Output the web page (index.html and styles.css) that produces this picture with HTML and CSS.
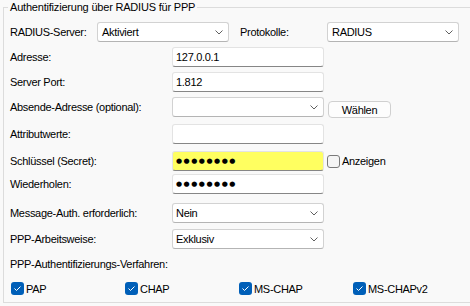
FILE: index.html
```html
<!DOCTYPE html>
<html lang="de">
<head>
    <meta charset="UTF-8">
    <title>RADIUS für PPP</title>
    <link rel="stylesheet" href="styles.css">
</head>
<body>
    <fieldset class="group">
        <legend>Authentifizierung über RADIUS für PPP</legend>

        <div class="server-row">
            <span class="label label-wide">RADIUS-Server:</span>
            <div class="combo combo-top">
                <span>Aktiviert</span>
                <svg class="chevron" width="8" height="5" viewBox="0 0 8 5"><path d="M0.5 0.5 L4 4 L7.5 0.5"/></svg>
            </div>
            <span class="label label-wide label-proto">Protokolle:</span>
            <div class="combo combo-top">
                <span>RADIUS</span>
                <svg class="chevron" width="8" height="5" viewBox="0 0 8 5"><path d="M0.5 0.5 L4 4 L7.5 0.5"/></svg>
            </div>
        </div>

        <div class="form">
            <span class="label">Adresse:</span>
            <div class="field">127.0.0.1</div>
            <span></span>

            <span class="label">Server Port:</span>
            <div class="field">1.812</div>
            <span></span>

            <span class="label">Absende-Adresse (optional):</span>
            <div class="combo">
                <span></span>
                <svg class="chevron" width="8" height="5" viewBox="0 0 8 5"><path d="M0.5 0.5 L4 4 L7.5 0.5"/></svg>
            </div>
            <button class="btn">Wählen</button>

            <span class="label">Attributwerte:</span>
            <div class="field"></div>
            <span></span>

            <span class="label">Schlüssel (Secret):</span>
            <div class="field field-secret"><span class="dots">●●●●●●●●</span></div>
            <label class="check check-show"><span class="box"></span>Anzeigen</label>

            <span class="label">Wiederholen:</span>
            <div class="field"><span class="dots">●●●●●●●●</span></div>
            <span></span>

            <span class="label">Message-Auth. erforderlich:</span>
            <div class="combo">
                <span>Nein</span>
                <svg class="chevron" width="8" height="5" viewBox="0 0 8 5"><path d="M0.5 0.5 L4 4 L7.5 0.5"/></svg>
            </div>
            <span></span>

            <span class="label">PPP-Arbeitsweise:</span>
            <div class="combo">
                <span>Exklusiv</span>
                <svg class="chevron" width="8" height="5" viewBox="0 0 8 5"><path d="M0.5 0.5 L4 4 L7.5 0.5"/></svg>
            </div>
            <span></span>
        </div>

        <div class="label methods-title">PPP-Authentifizierungs-Verfahren:</div>
        <div class="methods">
            <label class="check"><span class="box checked"><svg width="13" height="13" viewBox="0 0 13 13"><path d="M3.5 6.5 L5.5 8.5 L9.5 4.5"/></svg></span>PAP</label>
            <label class="check"><span class="box checked"><svg width="13" height="13" viewBox="0 0 13 13"><path d="M3.5 6.5 L5.5 8.5 L9.5 4.5"/></svg></span>CHAP</label>
            <label class="check"><span class="box checked"><svg width="13" height="13" viewBox="0 0 13 13"><path d="M3.5 6.5 L5.5 8.5 L9.5 4.5"/></svg></span>MS-CHAP</label>
            <label class="check"><span class="box checked"><svg width="13" height="13" viewBox="0 0 13 13"><path d="M3.5 6.5 L5.5 8.5 L9.5 4.5"/></svg></span>MS-CHAPv2</label>
        </div>
    </fieldset>
</body>
</html>
```

FILE: styles.css
```css
:root {
    --bg: #f9f9f9;
    --line: #dcdcdc;
    --field-border: #e3e3e3;
    --field-bottom: #868686;
    --accent: #005fb8;
}

body {
    margin: 0;
    width: 470px;
    height: 306px;
    background: var(--bg);
    color: #000;
    font-family: 'Liberation Sans', Arial, sans-serif;
    font-size: 11px;
    letter-spacing: -0.3px;
    overflow: hidden;
}

.group {
    box-sizing: border-box;
    width: 466px;
    height: 303px;
    margin: 0 0 0 3px;
    padding: 7px 6px 0 6px;
    border: 1px solid var(--line);
}

.group legend {
    line-height: 15px;
    padding: 0 2px;
    margin-left: -2px;
    letter-spacing: -0.2px;
}

.label {
    display: flex;
    align-items: center;
    height: 20px;
    white-space: nowrap;
}

.server-row {
    display: flex;
    align-items: center;
    height: 20px;
}

.label-wide {
    width: 87px;
    flex: none;
}

.label-proto {
    margin-left: 11px;
}

.combo,
.field {
    box-sizing: border-box;
    display: flex;
    align-items: center;
    height: 20px;
    background: #fff;
    border-radius: 3px;
    white-space: nowrap;
}

.combo {
    justify-content: space-between;
    padding: 0 5px 0 3px;
    border: 1px solid #d2d2d2;
    border-bottom-color: #b4b4b4;
}

.combo-top {
    width: 132px;
    flex: none;
    padding-left: 4px;
}

.field {
    padding: 0 3px;
    border: 1px solid var(--field-border);
    border-bottom-color: var(--field-bottom);
}

.field-secret {
    background: #ffff60;
}

.chevron {
    fill: none;
    stroke: #606060;
    stroke-width: 1;
}

.dots {
    font-family: 'DejaVu Sans', sans-serif;
    font-size: 7px;
    letter-spacing: 1.5px;
}

.form {
    display: grid;
    grid-template-columns: 158px 152px 1fr;
    grid-template-rows: 25px 25px 27px 27px 23px 29px 26px 20px;
    column-gap: 4px;
    align-items: start;
    margin-top: 5px;
}

.btn {
    box-sizing: border-box;
    width: 63px;
    height: 17px;
    margin-top: 4px;
    padding: 0;
    font: inherit;
    letter-spacing: inherit;
    color: #000;
    background: #fdfdfd;
    border: 1px solid #d0d0d0;
    border-radius: 4px;
}

.methods-title {
    height: 14px;
    margin-top: 8px;
}

.methods {
    display: grid;
    grid-template-columns: repeat(4, 114px);
    margin: 11px 0 0 1px;
}

.check {
    display: flex;
    align-items: center;
    gap: 2px;
    height: 13px;
    white-space: nowrap;
}

.check-show {
    height: 20px;
    margin-left: -1px;
}

.box {
    box-sizing: border-box;
    width: 13px;
    height: 13px;
    flex: none;
    border: 1px solid #7a7a7a;
    border-radius: 3px;
    background: #f5f5f5;
}

.box.checked {
    border: none;
    background: var(--accent);
}

.box svg {
    display: block;
    fill: none;
    stroke: #fff;
    stroke-width: 1;
}
```
